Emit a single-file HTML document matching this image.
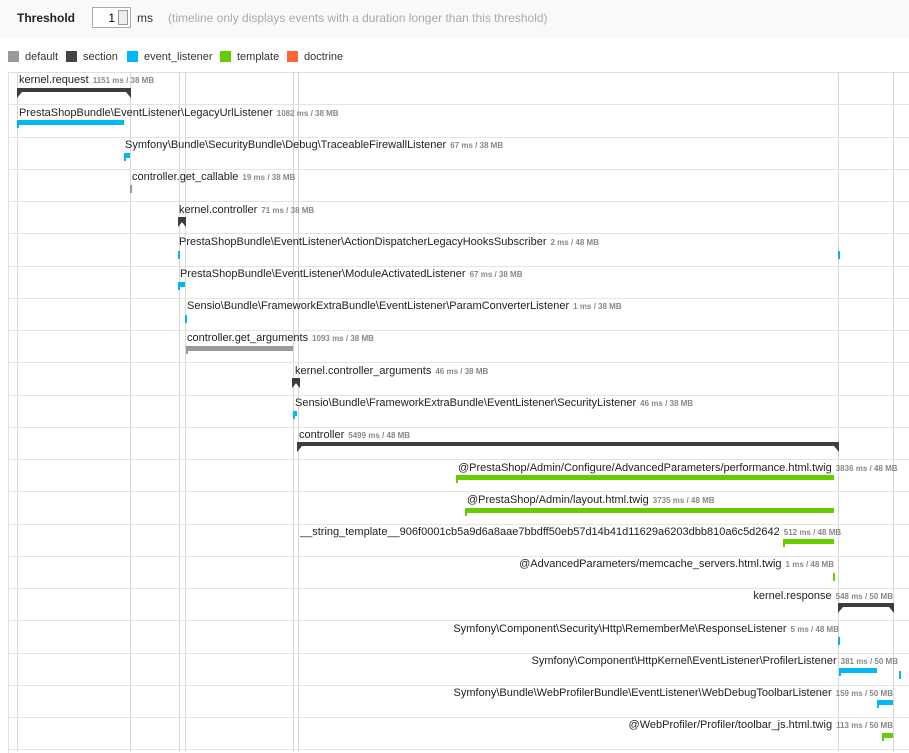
<!DOCTYPE html>
<html><head><meta charset="utf-8"><style>
body{margin:0;width:909px;height:750px;background:#fff;font-family:"Liberation Sans",sans-serif;position:relative;overflow:hidden}
.hdr{position:absolute;left:0;top:0;width:909px;height:38px;background:#f9f9f9}
.thr{position:absolute;left:17px;top:11px;font-weight:bold;font-size:12px;color:#222}
.inp{position:absolute;left:92px;top:7px;width:39px;height:21px;border:1px solid #aaa;background:#fff;box-sizing:border-box}
.inp span{position:absolute;right:15px;top:3px;font-size:12px}
.inp i{position:absolute;right:2px;top:2px;width:10px;height:15px;border:1px solid #999;background:#eee;box-sizing:border-box}
.ms{position:absolute;left:137px;top:11px;font-size:12px;color:#333}
.hint{position:absolute;left:168px;top:11px;font-size:12px;color:#aaa}
.leg{position:absolute;top:51px;font-size:11px;color:#333}
.leg b{display:inline-block;width:11px;height:11px;vertical-align:-2px;margin-right:6px}
.grid{position:absolute;left:8px;top:72px;width:900px;height:680px;border-left:1px solid #e0e0e0;border-right:1px solid #e0e0e0;border-top:1px solid #e0e0e0}
.v{position:absolute;top:72px;height:680px;width:1px;background:#d6d6d6}
.h{position:absolute;left:8px;width:901px;height:1px;background:#e4e4e4}
.l{position:absolute;font-size:11px;color:#222;white-space:nowrap}
.l small{font-size:8px;color:#888;font-weight:bold;margin-left:4px}
.b{position:absolute;height:5px}
.b:before{content:"";position:absolute;left:0;top:0;width:2px;height:8px;background:inherit}
.sec{position:absolute;height:4px;background:#3d3d3d}
.sec:before,.sec:after{content:"";position:absolute;top:4px;border-top:6px solid #3d3d3d}
.sec:before{left:0;border-right:5px solid transparent}
.sec:after{right:0;border-left:5px solid transparent}
</style></head><body>
<div class="hdr"></div>
<div class="thr">Threshold</div>
<div class="inp"><span>1</span><i></i></div>
<div class="ms">ms</div>
<div class="hint">(timeline only displays events with a duration longer than this threshold)</div>
<div class="leg" style="left:8px"><b style="background:#999"></b>default</div>
<div class="leg" style="left:66px"><b style="background:#444"></b>section</div>
<div class="leg" style="left:127px"><b style="background:#00b8f5"></b>event_listener</div>
<div class="leg" style="left:220px"><b style="background:#66cc00"></b>template</div>
<div class="leg" style="left:287px"><b style="background:#ff6633"></b>doctrine</div>
<div class="grid"></div>
<div class="v" style="left:17px"></div><div class="v" style="left:130px"></div><div class="v" style="left:179px"></div><div class="v" style="left:185px"></div><div class="v" style="left:293px"></div><div class="v" style="left:298px"></div><div class="v" style="left:838px"></div><div class="v" style="left:893px"></div>
<div class="h" style="top:104px"></div><div class="h" style="top:137px"></div><div class="h" style="top:169px"></div><div class="h" style="top:201px"></div><div class="h" style="top:233px"></div><div class="h" style="top:266px"></div><div class="h" style="top:298px"></div><div class="h" style="top:330px"></div><div class="h" style="top:362px"></div><div class="h" style="top:395px"></div><div class="h" style="top:427px"></div><div class="h" style="top:459px"></div><div class="h" style="top:491px"></div><div class="h" style="top:524px"></div><div class="h" style="top:556px"></div><div class="h" style="top:588px"></div><div class="h" style="top:620px"></div><div class="h" style="top:653px"></div><div class="h" style="top:685px"></div><div class="h" style="top:717px"></div><div class="h" style="top:749px"></div>

<div class="l" style="left:19px;top:74px">kernel.request<small>1151 ms / 38 MB</small></div>
<div class="sec" style="left:17px;top:88px;width:114px"></div>
<div class="l" style="left:19px;top:107px">PrestaShopBundle\EventListener\LegacyUrlListener<small>1082 ms / 38 MB</small></div>
<div class="b" style="left:17px;top:120px;width:107px;background:#00b8f5"></div>
<div class="l" style="left:125px;top:139px">Symfony\Bundle\SecurityBundle\Debug\TraceableFirewallListener<small>67 ms / 38 MB</small></div>
<div class="b" style="left:124px;top:153px;width:6px;background:#00b8f5"></div>
<div class="l" style="left:132px;top:171px">controller.get_callable<small>19 ms / 38 MB</small></div>
<div class="b" style="left:130px;top:185px;width:2px;background:#999"></div>
<div class="l" style="left:179px;top:204px">kernel.controller<small>71 ms / 38 MB</small></div>
<div class="sec" style="left:178px;top:217px;width:8px"></div>
<div class="l" style="left:179px;top:236px">PrestaShopBundle\EventListener\ActionDispatcherLegacyHooksSubscriber<small>2 ms / 48 MB</small></div>
<div class="b" style="left:178px;top:251px;width:2px;background:#00b8f5"></div>
<div class="b" style="left:838px;top:251px;width:2px;background:#00b8f5"></div>
<div class="l" style="left:180px;top:268px">PrestaShopBundle\EventListener\ModuleActivatedListener<small>67 ms / 38 MB</small></div>
<div class="b" style="left:178px;top:282px;width:7px;background:#00b8f5"></div>
<div class="l" style="left:187px;top:300px">Sensio\Bundle\FrameworkExtraBundle\EventListener\ParamConverterListener<small>1 ms / 38 MB</small></div>
<div class="b" style="left:185px;top:315px;width:2px;background:#00b8f5"></div>
<div class="l" style="left:187px;top:332px">controller.get_arguments<small>1093 ms / 38 MB</small></div>
<div class="b" style="left:186px;top:346px;width:107px;background:#999"></div>
<div class="l" style="left:295px;top:365px">kernel.controller_arguments<small>46 ms / 38 MB</small></div>
<div class="sec" style="left:292px;top:378px;width:8px"></div>
<div class="l" style="left:295px;top:397px">Sensio\Bundle\FrameworkExtraBundle\EventListener\SecurityListener<small>46 ms / 38 MB</small></div>
<div class="b" style="left:293px;top:411px;width:4px;background:#00b8f5"></div>
<div class="l" style="left:299px;top:429px">controller<small>5499 ms / 48 MB</small></div>
<div class="sec" style="left:297px;top:442px;width:542px"></div>
<div class="l" style="left:458px;top:462px">@PrestaShop/Admin/Configure/AdvancedParameters/performance.html.twig<small>3836 ms / 48 MB</small></div>
<div class="b" style="left:456px;top:475px;width:378px;background:#66cc00"></div>
<div class="l" style="left:467px;top:494px">@PrestaShop/Admin/layout.html.twig<small>3735 ms / 48 MB</small></div>
<div class="b" style="left:465px;top:508px;width:369px;background:#66cc00"></div>
<div class="l" style="left:300px;top:526px">__string_template__906f0001cb5a9d6a8aae7bbdff50eb57d14b41d11629a6203dbb810a6c5d2642<small>512 ms / 48 MB</small></div>
<div class="b" style="left:783px;top:539px;width:51px;background:#66cc00"></div>
<div class="l" style="right:75px;top:558px">@AdvancedParameters/memcache_servers.html.twig<small>1 ms / 48 MB</small></div>
<div class="b" style="left:833px;top:573px;width:2px;background:#66cc00"></div>
<div class="l" style="right:16px;top:590px">kernel.response<small>548 ms / 50 MB</small></div>
<div class="sec" style="left:838px;top:603px;width:56px"></div>
<div class="l" style="right:70px;top:623px">Symfony\Component\Security\Http\RememberMe\ResponseListener<small>5 ms / 48 MB</small></div>
<div class="b" style="left:838px;top:637px;width:2px;background:#00b8f5"></div>
<div class="l" style="right:11px;top:655px">Symfony\Component\HttpKernel\EventListener\ProfilerListener<small>381 ms / 50 MB</small></div>
<div class="b" style="left:839px;top:668px;width:38px;background:#00b8f5"></div>
<div class="b" style="left:899px;top:671px;width:2px;background:#00b8f5"></div>
<div class="l" style="right:16px;top:687px">Symfony\Bundle\WebProfilerBundle\EventListener\WebDebugToolbarListener<small>159 ms / 50 MB</small></div>
<div class="b" style="left:877px;top:700px;width:16px;background:#00b8f5"></div>
<div class="l" style="right:16px;top:719px">@WebProfiler/Profiler/toolbar_js.html.twig<small>113 ms / 50 MB</small></div>
<div class="b" style="left:882px;top:733px;width:11px;background:#66cc00"></div>
</body></html>
